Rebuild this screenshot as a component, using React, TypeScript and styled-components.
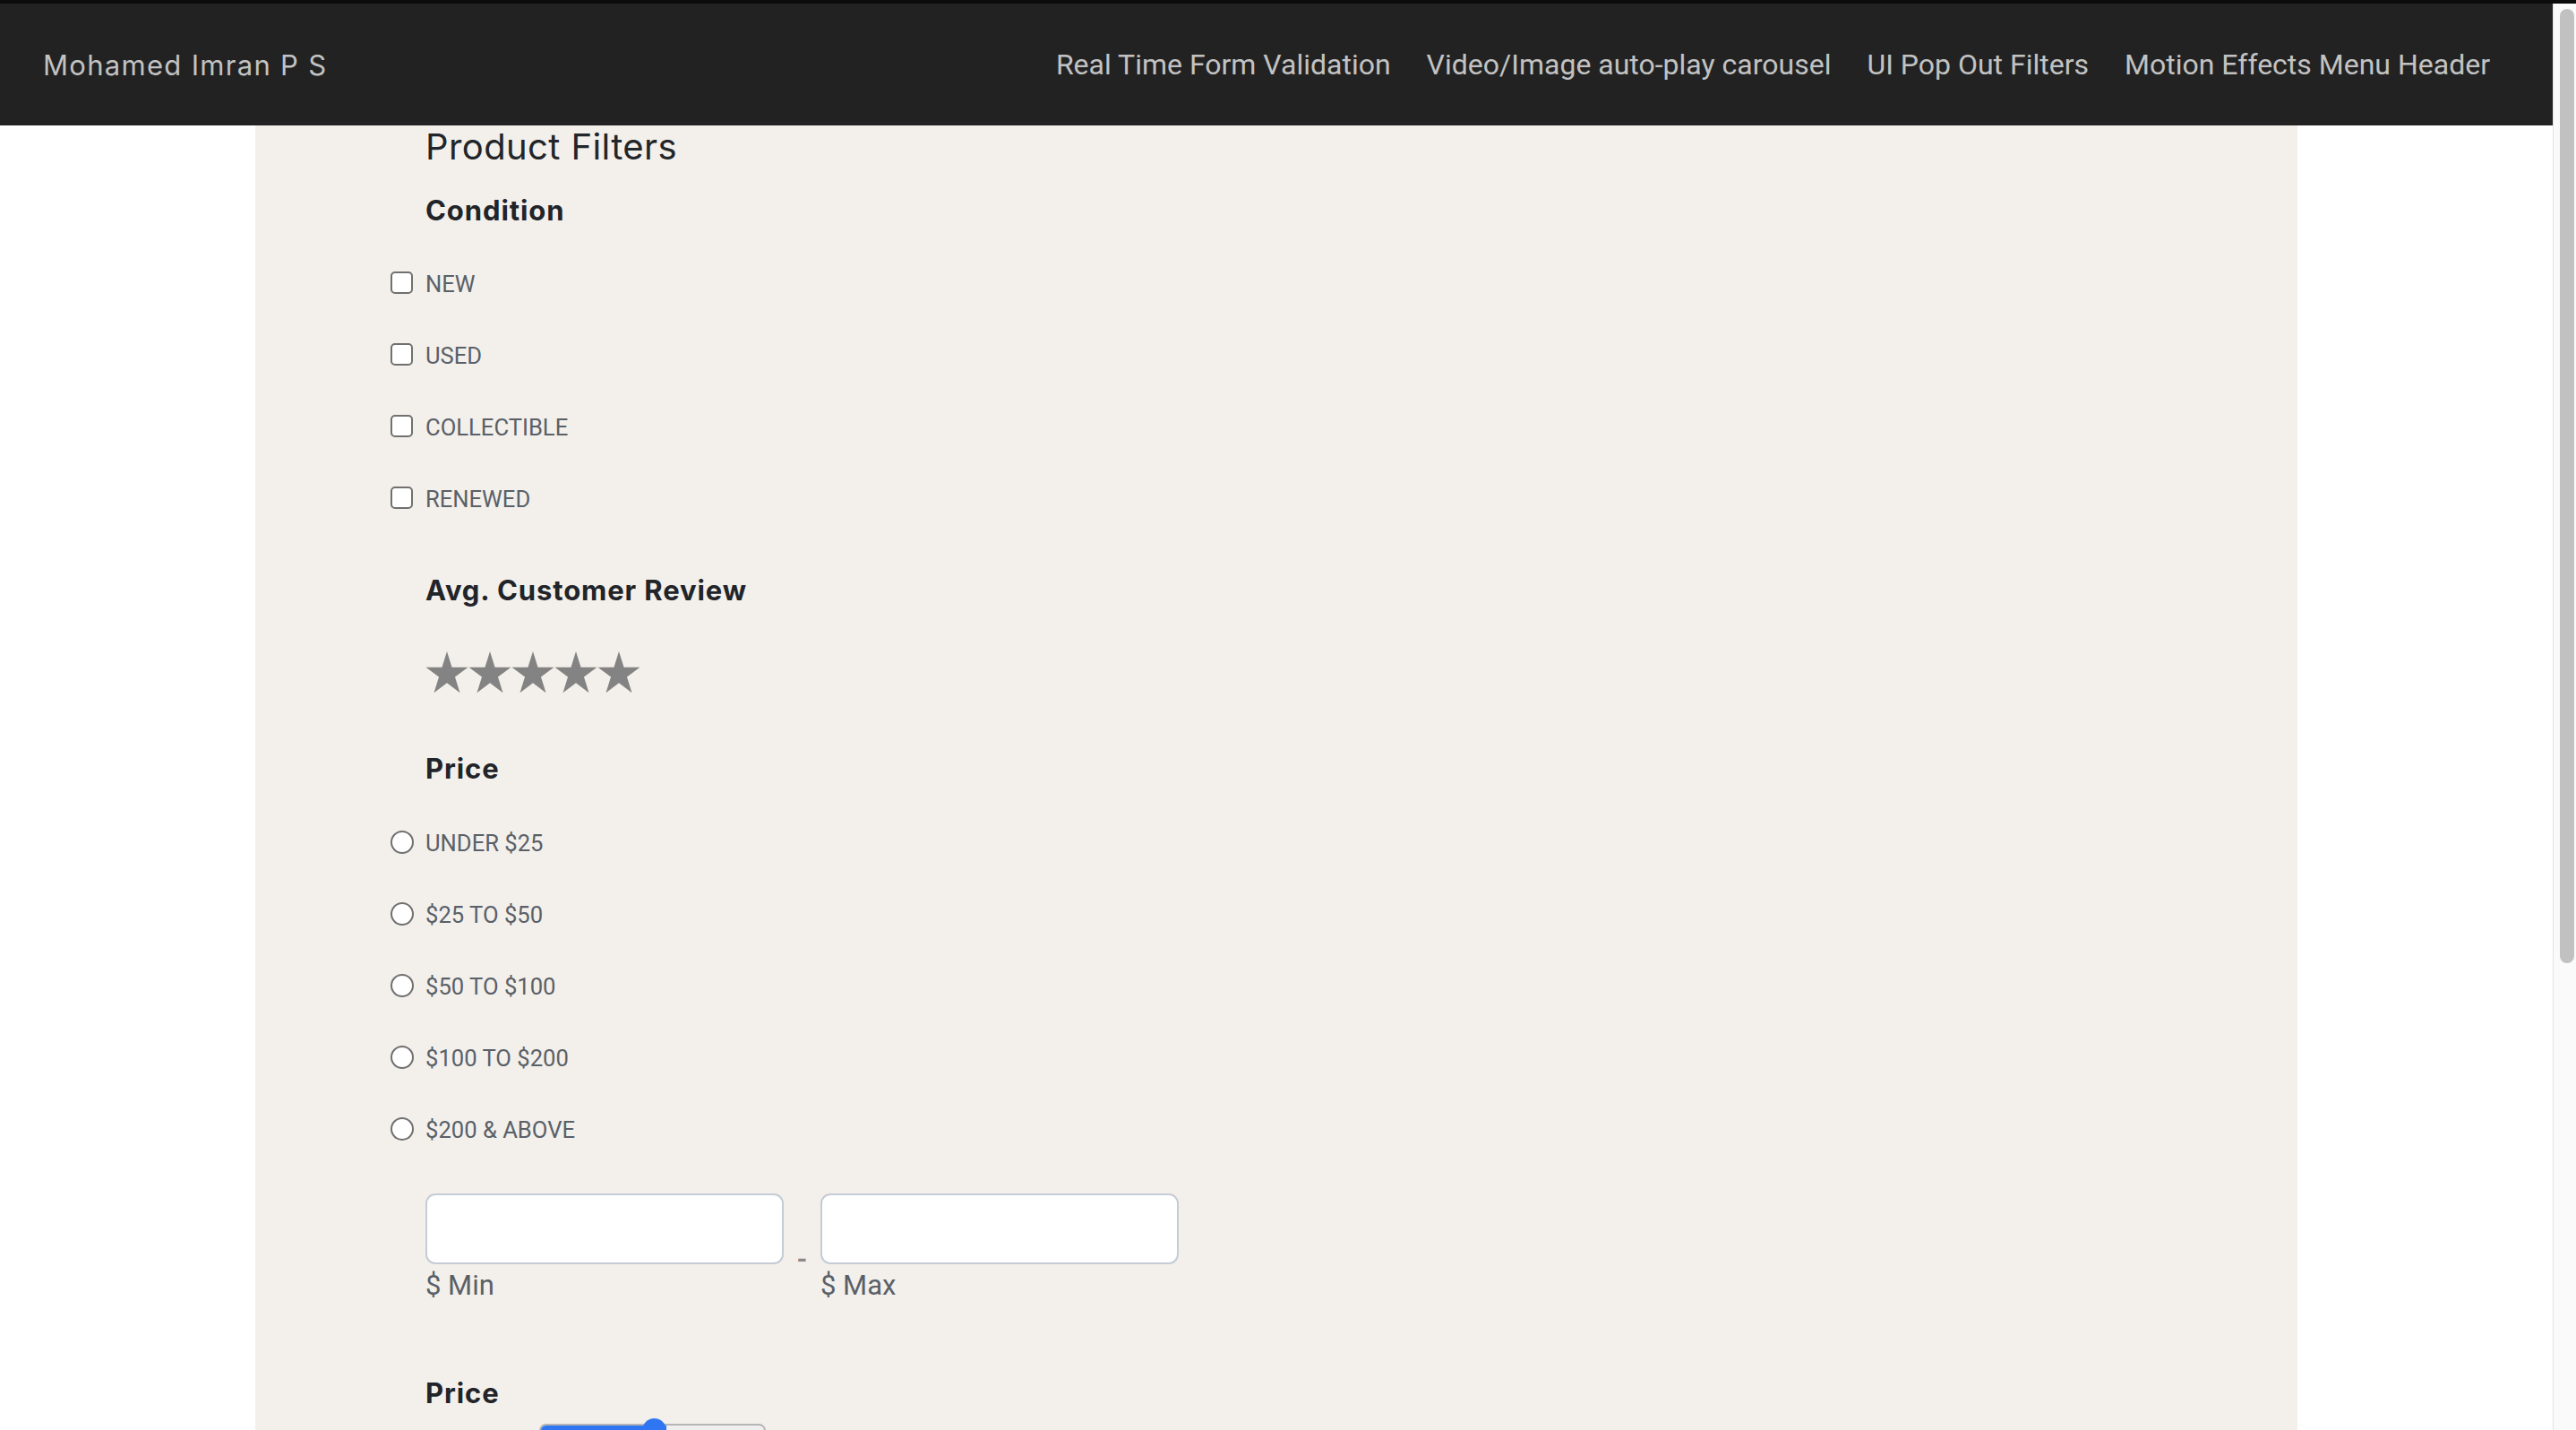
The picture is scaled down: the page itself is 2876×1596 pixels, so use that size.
import React from 'react';
import styled, { createGlobalStyle } from 'styled-components';

const GlobalStyle = createGlobalStyle`
  html, body {
    margin: 0;
    padding: 0;
    height: 100%;
    overflow: hidden;
    background: #fff;
  }
  * {
    box-sizing: border-box;
  }
`;

const Window = styled.div`
  display: flex;
  flex-direction: column;
  height: 100vh;
`;

const TopEdge = styled.div`
  height: 4px;
  flex-shrink: 0;
  background: #0b0b0b;
`;

const Viewport = styled.div`
  flex: 1;
  display: flex;
  min-height: 0;
`;

const Scroller = styled.div`
  flex: 1;
  overflow: hidden;
  background: #fff;
`;

const ScrollRail = styled.div`
  width: 26px;
  flex-shrink: 0;
  background: #fafafa;
  border-left: 1px solid #e4e4e4;
  padding: 6px 2px 0 7px;
`;

const ScrollThumb = styled.div`
  height: 1065px;
  border-radius: 8px;
  background: #c1c1c1;
`;

const NavBar = styled.nav`
  height: 136px;
  background: #222222;
  display: flex;
  align-items: center;
  justify-content: space-between;
  padding: 0 50px 0 48px;
`;

const Brand = styled.a`
  font-family: Inter, 'Noto Sans', sans-serif;
  font-size: 31px;
  letter-spacing: 1.3px;
  color: #c2c2c2;
  text-decoration: none;
`;

const NavLinks = styled.ul`
  display: flex;
  list-style: none;
  margin: 0;
  padding: 0;
`;

const NavLink = styled.a`
  display: block;
  padding: 0 20px;
  font-family: Roboto, 'Liberation Sans', sans-serif;
  font-size: 32px;
  color: #c2c2c2;
  text-decoration: none;
`;

const Panel = styled.main`
  max-width: 2280px;
  min-height: 2230px;
  margin: 0 auto;
  background: #f3f0eb;
  padding: 0 0 0 190px;
  display: flex;
  flex-direction: column;
  align-items: flex-start;
`;

const Title = styled.h2`
  margin: 0;
  font-family: Inter, 'Noto Sans', sans-serif;
  font-weight: 400;
  font-size: 40px;
  line-height: 48px;
  letter-spacing: 0.4px;
  color: #222529;
`;

const SectionHeading = styled.h4<{ $top: number }>`
  margin: ${({ $top }) => $top}px 0 0;
  font-family: Inter, 'Noto Sans', sans-serif;
  font-weight: 700;
  font-size: 31px;
  line-height: 36px;
  letter-spacing: 0.9px;
  color: #212429;
`;

const OptionList = styled.div<{ $top: number }>`
  margin: ${({ $top }) => $top}px 0 0 -39px;
  display: flex;
  flex-direction: column;
  gap: 40px;
`;

const OptionRow = styled.label`
  display: grid;
  grid-template-columns: 39px auto;
  align-items: center;
  height: 40px;
  font-family: Roboto, 'Liberation Sans', sans-serif;
  font-size: 25.6px;
  line-height: 40px;
  color: #5a6068;
`;

const Check = styled.input`
  appearance: none;
  margin: 0 0 4px;
  width: 25px;
  height: 25px;
  background: #fff;
  border: 2px solid #707070;
  border-radius: 5px;
`;

const Radio = styled.input`
  appearance: none;
  margin: 0 0 3px;
  width: 26px;
  height: 26px;
  background: #fff;
  border: 2px solid #707070;
  border-radius: 50%;
`;

const StarRow = styled.div`
  margin-top: 50px;
  display: flex;
  height: 47px;
`;

const RangeGrid = styled.div`
  margin-top: 51px;
  display: grid;
  grid-template-columns: 400px 41px 400px;
  align-items: start;
`;

const RangeField = styled.div`
  display: flex;
  flex-direction: column;
`;

const RangeBox = styled.input`
  width: 100%;
  height: 79px;
  background: #fff;
  border: 2px solid #c5ccd5;
  border-radius: 11px;
  outline: none;
`;

const RangeLabel = styled.span`
  margin-top: 5px;
  font-family: Roboto, 'Liberation Sans', sans-serif;
  font-size: 31px;
  line-height: 38px;
  color: #5a6068;
`;

const Dash = styled.span`
  display: flex;
  justify-content: center;
  align-items: flex-end;
  height: 88px;
  font-family: Roboto, 'Liberation Sans', sans-serif;
  font-weight: 700;
  font-size: 30px;
  line-height: 30px;
  color: #8a8a8a;
`;

const SliderWrap = styled.div`
  margin: 10px 0 0 127px;
  position: relative;
  width: 253px;
  height: 27px;
  display: flex;
  align-items: center;
`;

const SliderTrack = styled.div`
  width: 100%;
  height: 15px;
  border-radius: 8px;
  border: 2px solid #b5b5b5;
  background: #efefef;
  overflow: hidden;
`;

const SliderFill = styled.div`
  margin: -2px 0 0 -2px;
  height: 15px;
  background: #3076f2;
  border-radius: 8px 0 0 8px;
`;

const SliderThumb = styled.div`
  position: absolute;
  top: 0;
  width: 27px;
  height: 27px;
  border-radius: 50%;
  background: #3076f2;
`;

const Star = () => (
  <svg width="48" height="47" viewBox="0 0 48 45.5" preserveAspectRatio="none">
    <polygon
      points="24,0 29.54,17.07 47.49,17.07 32.97,27.61 38.52,44.68 24,34.13 9.48,44.68 15.03,27.61 0.51,17.07 18.46,17.07"
      fill="#838383"
    />
  </svg>
);

const links = [
  'Real Time Form Validation',
  'Video/Image auto-play carousel',
  'UI Pop Out Filters',
  'Motion Effects Menu Header',
];

const conditions = ['NEW', 'USED', 'COLLECTIBLE', 'RENEWED'];
const prices = ['UNDER $25', '$25 TO $50', '$50 TO $100', '$100 TO $200', '$200 & ABOVE'];

const PriceSlider: React.FC<{ value: number }> = ({ value }) => {
  const width = 253;
  const thumb = 27;
  const left = (value / 100) * (width - thumb);
  return (
    <SliderWrap>
      <SliderTrack>
        <SliderFill style={{ width: left + thumb }} />
      </SliderTrack>
      <SliderThumb style={{ left }} />
    </SliderWrap>
  );
};

const App: React.FC = () => {
  return (
    <>
      <GlobalStyle />
      <Window>
        <TopEdge />
        <Viewport>
          <Scroller>
            <NavBar>
              <Brand href="#">Mohamed Imran P S</Brand>
              <NavLinks>
                {links.map((l) => (
                  <li key={l}>
                    <NavLink href="#">{l}</NavLink>
                  </li>
                ))}
              </NavLinks>
            </NavBar>
            <Panel>
              <Title>Product Filters</Title>
              <SectionHeading $top={29}>Condition</SectionHeading>
              <OptionList $top={44}>
                {conditions.map((c) => (
                  <OptionRow key={c}>
                    <Check type="checkbox" />
                    {c}
                  </OptionRow>
                ))}
              </OptionList>
              <SectionHeading $top={64}>Avg. Customer Review</SectionHeading>
              <StarRow>
                {[0, 1, 2, 3, 4].map((i) => (
                  <Star key={i} />
                ))}
              </StarRow>
              <SectionHeading $top={66}>Price</SectionHeading>
              <OptionList $top={45}>
                {prices.map((p) => (
                  <OptionRow key={p}>
                    <Radio type="radio" name="price" />
                    {p}
                  </OptionRow>
                ))}
              </OptionList>
              <RangeGrid>
                <RangeField>
                  <RangeBox type="text" />
                  <RangeLabel>$ Min</RangeLabel>
                </RangeField>
                <Dash>-</Dash>
                <RangeField>
                  <RangeBox type="text" />
                  <RangeLabel>$ Max</RangeLabel>
                </RangeField>
              </RangeGrid>
              <SectionHeading $top={83}>Price</SectionHeading>
              <PriceSlider value={51} />
            </Panel>
          </Scroller>
          <ScrollRail>
            <ScrollThumb />
          </ScrollRail>
        </Viewport>
      </Window>
    </>
  );
};

export default App;
